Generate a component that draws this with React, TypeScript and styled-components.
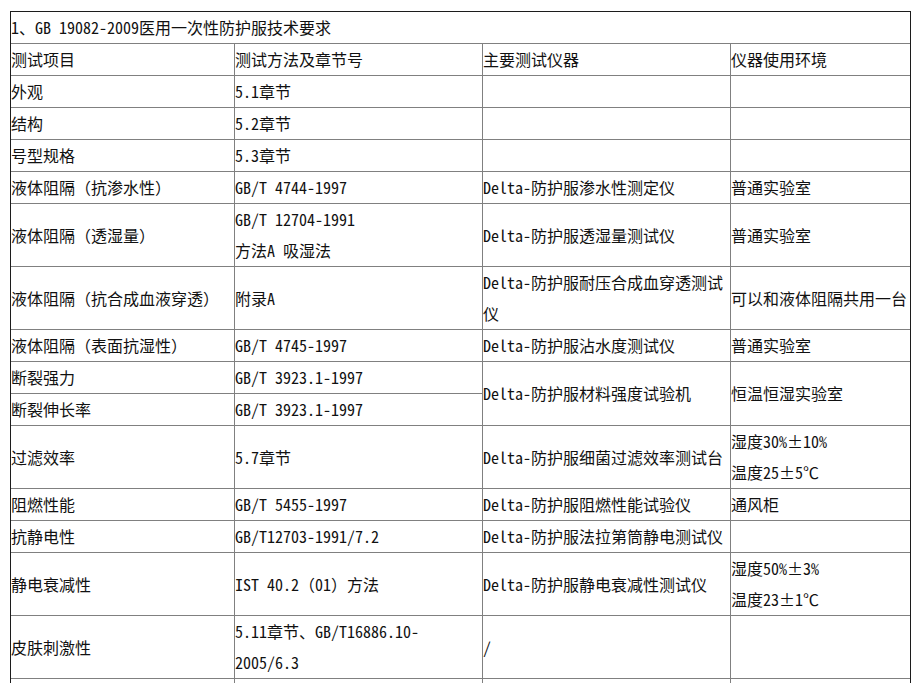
import { createGlobalStyle } from 'styled-components';
import styled from 'styled-components';

const GlobalStyle = createGlobalStyle`
    body {
        margin: 0;
        background: #ffffff;
    }
`;

const Page = styled.div`
    padding: 11px 0 0 10px;
    font-family: "Noto Sans Mono CJK SC", "Noto Sans CJK SC", "Liberation Mono", monospace;
    font-size: 16px;
    color: #111111;
`;

const Table = styled.table`
    width: 900px;
    border-collapse: collapse;
    table-layout: fixed;
    outline: 1px solid #1c1c1c;
    outline-offset: -1px;
`;

const Cell = styled.td`
    border: 1px solid #808080;
    padding: 0;
    height: 31px;
    line-height: 31px;
    vertical-align: middle;
    text-align: left;
`;

const Line = styled.div`
    line-height: 31px;
`;

type Row = {
    item: string;
    method: string[];
    device?: string;
    env?: string[];
    span?: number;
    skip?: boolean;
};

const rows: Row[] = [
    { item: '外观', method: ['5.1章节'] },
    { item: '结构', method: ['5.2章节'] },
    { item: '号型规格', method: ['5.3章节'] },
    { item: '液体阻隔（抗渗水性）', method: ['GB/T 4744-1997'], device: 'Delta-防护服渗水性测定仪', env: ['普通实验室'] },
    { item: '液体阻隔（透湿量）', method: ['GB/T 12704-1991', '方法A 吸湿法'], device: 'Delta-防护服透湿量测试仪', env: ['普通实验室'] },
    { item: '液体阻隔（抗合成血液穿透）', method: ['附录A'], device: 'Delta-防护服耐压合成血穿透测试仪', env: ['可以和液体阻隔共用一台'] },
    { item: '液体阻隔（表面抗湿性）', method: ['GB/T 4745-1997'], device: 'Delta-防护服沾水度测试仪', env: ['普通实验室'] },
    { item: '断裂强力', method: ['GB/T 3923.1-1997'], device: 'Delta-防护服材料强度试验机', env: ['恒温恒湿实验室'], span: 2 },
    { item: '断裂伸长率', method: ['GB/T 3923.1-1997'], skip: true },
    { item: '过滤效率', method: ['5.7章节'], device: 'Delta-防护服细菌过滤效率测试台', env: ['湿度30%±10%', '温度25±5℃'] },
    { item: '阻燃性能', method: ['GB/T 5455-1997'], device: 'Delta-防护服阻燃性能试验仪', env: ['通风柜'] },
    { item: '抗静电性', method: ['GB/T12703-1991/7.2'], device: 'Delta-防护服法拉第筒静电测试仪' },
    { item: '静电衰减性', method: ['IST 40.2（01）方法'], device: 'Delta-防护服静电衰减性测试仪', env: ['湿度50%±3%', '温度23±1℃'] },
    { item: '皮肤刺激性', method: ['5.11章节、GB/T16886.10-2005/6.3'], device: '/' },
    // next row runs past the bottom of the window, only its top line shows
    { item: '', method: [] },
];

const Lines = ({ list }: { list?: string[] }) => (
    <>
        {(list || []).map((t, i) => (
            <Line key={i}>{t}</Line>
        ))}
    </>
);

const App = () => {
    return (
        <Page>
            <GlobalStyle />
            <Table>
                <colgroup>
                    <col style={{ width: 224 }} />
                    <col style={{ width: 248 }} />
                    <col style={{ width: 248 }} />
                    <col style={{ width: 180 }} />
                </colgroup>
                <tbody>
                    <tr>
                        <Cell colSpan={4}>1、GB 19082-2009医用一次性防护服技术要求</Cell>
                    </tr>
                    <tr>
                        <Cell>测试项目</Cell>
                        <Cell>测试方法及章节号</Cell>
                        <Cell>主要测试仪器</Cell>
                        <Cell>仪器使用环境</Cell>
                    </tr>
                    {rows.map((r, i) => (
                        <tr key={i}>
                            <Cell>{r.item}</Cell>
                            <Cell><Lines list={r.method} /></Cell>
                            {!r.skip && <Cell rowSpan={r.span || 1}>{r.device}</Cell>}
                            {!r.skip && <Cell rowSpan={r.span || 1}><Lines list={r.env} /></Cell>}
                        </tr>
                    ))}
                </tbody>
            </Table>
        </Page>
    );
};

export default App;
